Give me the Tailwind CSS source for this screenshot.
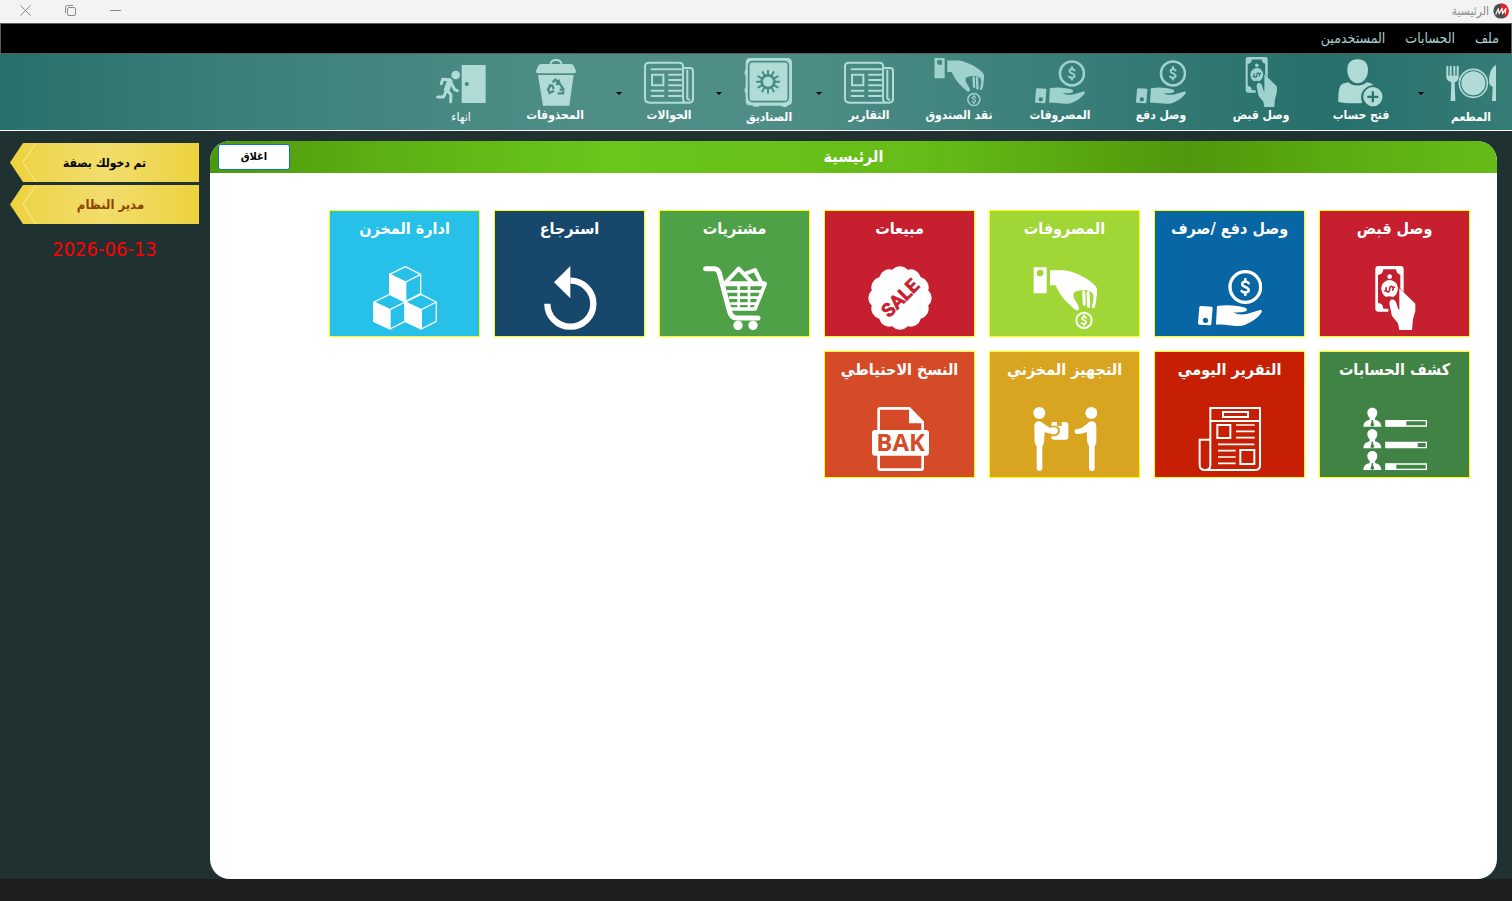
<!DOCTYPE html>
<html lang="ar" dir="rtl">
<head>
    <meta charset="utf-8">
    <title>الرئيسية</title>
    <script src="https://cdn.jsdelivr.net/npm/@tailwindcss/browser@4"></script>
</head>
<body class="min-h-screen flex flex-col bg-[#1f3231] font-['DejaVu_Sans_Condensed','DejaVu_Sans',sans-serif]">

    <!-- shared icons -->
    <svg class="hidden">
        <symbol id="dollar" viewBox="0 0 40 60">
            <path d="M31 18C27 11 10 10 10 21c0 10 21 8 21 19 0 10-18 10-23 3M20 4v9M20 47v9" fill="none" stroke="currentColor" stroke-width="8" stroke-linecap="round"/>
        </symbol>
        <symbol id="receipt" viewBox="0 0 192 192">
            <path fill-rule="evenodd" fill="currentColor" d="M46 0h67q9 0 9 9v70l-10-12V26q-11-1-13-16H61q-1 15-16 17v84q15 1 16 17h15v9H46q-9 0-9-9V9q0-9 9-9z"/>
            <circle cx="80" cy="32" r="7" fill="currentColor"/>
            <path fill="currentColor" d="M55 69a25 25 0 1 1 48 8q-3 11-13 16-14-4-20 0-13-6-15-24z"/>
            <g transform="rotate(68 80 69)" class="text-[var(--hole)]"><use href="#dollar" x="68" y="50" width="24" height="38"/></g>
            <path fill="currentColor" d="M84 101c-6 4-5 12-3 22l6 27 18 22 4 20h38l3-32 7-25v-22L120 77l-11-10v65c-7-4-6-27-17-31-3-1-6-1-8 0z"/>
        </symbol>
        <symbol id="pay" viewBox="0 0 192 192">
            <circle cx="142" cy="63" r="46" fill="none" stroke="currentColor" stroke-width="10"/>
            <use href="#dollar" x="123" y="35" width="38" height="56"/>
            <path fill="currentColor" fill-rule="evenodd" d="M11 120l30 2q3 0 3 4l-4 48q0 4-4 4l-32-2q-4 0-4-4l4-48q0-4 7-4zM22 155a8 8 0 1 0 1 16 8 8 0 0 0-1-16z"/>
            <path fill="currentColor" d="M57 120c35-6 65 0 85 5 6 3 6 9 1 11-11 4-23 4-37 3 12 8 27 7 40 5l40-12c6 0 7 4 4 8-14 20-29 26-48 36-10 5-25 4-37 3-22-2-40-4-48-3-2 0-3-1-3-3z"/>
        </symbol>
        <symbol id="drop-coin" viewBox="0 0 192 192">
            <path fill="currentColor" fill-rule="evenodd" d="M2 4h39v78H2zM21 11a10 10 0 1 0 1 20 10 10 0 0 0-1-20z"/>
            <path fill="currentColor" d="M51 13h42c44 5 91 38 97 51 3 8 2 18 2 26l-10-1c-4-11-14-16-30-16-15 0-31 3-31 13 0 13 13 24 18 41q-3 7-9 6c-25-18-48-42-62-75H51z"/>
            <path d="M152 78l2 37M165 80l2 41M186 80c1 15-1 30-5 42" fill="none" stroke="currentColor" stroke-width="9" stroke-linecap="round"/>
            <circle cx="153" cy="163" r="23" fill="none" stroke="currentColor" stroke-width="6"/>
            <use href="#dollar" x="140" y="145" width="26" height="36"/>
        </symbol>
        <symbol id="news" viewBox="0 0 150 150">
            <path d="M15 17h91q11 0 11 10v98q0 12 11 12H16q-13 0-13-13V28q0-11 12-11zM118 33h20q9 0 9 9v83q0 11-12 12h-10" fill="none" stroke="currentColor" stroke-width="6"/>
            <path d="M130 38v84q0 6 8 6" fill="none" stroke="currentColor" stroke-width="6"/>
            <path d="M24 53h34v32H24z" fill="none" stroke="currentColor" stroke-width="6"/>
            <path d="M23 37h88M75 53h36M75 69h36M75 85h36M23 101h35M75 101h36M23 117h35M75 117h36" stroke="currentColor" stroke-width="6" stroke-linecap="round"/>
        </symbol>
        <symbol id="arrow" viewBox="0 0 6 3"><path d="M0 0h6L3 3z"/></symbol>
    </svg>

    <!-- title bar -->
    <header class="flex h-[23px] items-center justify-between bg-[#f3f3f3] pr-[3px] pb-0.5 pl-5 text-[#8a8a8a]">
        <div class="flex items-center gap-1">
            <svg class="size-4" viewBox="0 0 42 42">
                <circle cx="21" cy="21" r="20" fill="#4b4f54"/>
                <path d="M21 1a20 20 0 0 1 12 36L18 20z" fill="#e3202b"/>
                <path d="M7 30l7-15 2 13 8-14 1 14 9-14-2 14" fill="none" stroke="#fff" stroke-width="3" stroke-linejoin="round"/>
            </svg>
            <h1 class="text-xs">الرئيسية</h1>
        </div>
        <div class="flex items-center gap-[34px]">
            <button aria-label="تصغير"><svg class="size-[11px]" viewBox="0 0 11 11"><path d="M0 5.500h11" stroke="#888"/></svg></button>
            <button aria-label="استعادة"><svg class="size-[11px]" viewBox="0 0 11 11" fill="none" stroke="#888"><rect x="2.500" y="2.500" width="8" height="8" rx="1.500"/><path d="M.5 8V2.500q0-2 2-2H8"/></svg></button>
            <button aria-label="اغلاق"><svg class="size-[11px]" viewBox="0 0 11 11" stroke="#888"><path d="M.5.500l10 10M10.500.500l-10 10"/></svg></button>
        </div>
    </header>

    <!-- menu -->
    <nav class="flex h-[31px] items-center gap-5 border border-[#5c5c5c] bg-black px-3 pb-0.5 text-sm text-[#a9d0d2]">
        <a href="#">ملف</a>
        <a href="#">الحسابات</a>
        <a href="#">المستخدمين</a>
    </nav>

    <!-- toolbar -->
    <div class="flex h-[77px] items-start border-b border-white bg-[linear-gradient(to_right,#27706b,#3c7f79_15%,#4e8e87_38%,#4e8e87_52%,#27706b_88%,#367c77)] pt-[3px] pr-px text-xs leading-4 font-bold text-white [--hole:#2f7771]">
        <button class="flex w-20 flex-col items-center gap-0.5">
            <svg class="size-[50px] text-[#b0dbd7]" viewBox="0 0 150 150">
                <circle cx="82" cy="79" r="42" fill="none" stroke="currentColor" stroke-width="5"/>
                <circle cx="82" cy="79" r="36" fill="currentColor"/>
                <path fill="currentColor" d="M1 28q3-4 6 0v28h4V28q3-4 6 0v28h5V28q3-4 6 0v28h4V28q3-4 6 0v33q0 11-12 15l2 56H14l2-56Q1 71 1 61zM150 24v108h-12l2-42q-11-5-11-17c0-22 7-42 21-49z"/>
            </svg>
            المطعم
        </button>
        <svg class="mt-[35px] h-[3px] w-5"><use href="#arrow"/></svg>
        <button class="flex w-25 flex-col items-center">
            <svg class="size-[50px] text-[#b0dbd7]" viewBox="0 0 150 150">
                <path fill="currentColor" d="M65 7c22 0 31 13 31 32 0 22-14 40-31 40S34 61 34 39C34 20 43 7 65 7zM37 76c14 13 41 13 55 0 12 2 17 4 20 9a36 36 0 0 0-34 50l1 3C50 140 25 139 7 134c0-24 1-44 9-51 4-4 12-5 21-7z"/>
                <path fill="currentColor" fill-rule="evenodd" d="M110 90a29 29 0 1 0 1 58 29 29 0 0 0-1-58zM107 103h7v13h13v7h-13v13h-7v-13H94v-7h13z"/>
            </svg>
            فتح حساب
        </button>
        <button class="flex w-25 flex-col items-center">
            <svg class="size-[50px] text-[#9fd1cd]"><use href="#receipt"/></svg>
            وصل قبض
        </button>
        <button class="flex w-25 flex-col items-center">
            <svg class="size-[50px] text-[#9fd1cd]"><use href="#pay"/></svg>
            وصل دفع
        </button>
        <button class="flex w-[102px] flex-col items-center">
            <svg class="size-[50px] text-[#9fd1cd]"><use href="#pay"/></svg>
            المصروفات
        </button>
        <button class="flex w-25 flex-col items-center">
            <svg class="size-[50px] text-[#9fd1cd]"><use href="#drop-coin"/></svg>
            نقد الصندوق
        </button>
        <button class="flex w-20 flex-col items-center">
            <svg class="size-[50px] text-[#b0dbd7]"><use href="#news"/></svg>
            التقارير
        </button>
        <svg class="mt-[35px] h-[3px] w-5"><use href="#arrow"/></svg>
        <button class="flex w-20 flex-col items-center gap-0.5">
            <svg class="size-[50px] text-[#b0dbd7]" viewBox="0 0 150 150">
                <path fill="currentColor" d="M18 3h112q14 0 14 14v114q0 13-13 14v2q-9 7-20-1H48q-12 7-22 0v-1H18q-13 0-13-13v-22q-7-10 0-21V58q-7-10 0-21V17Q5 3 18 3z"/>
                <rect x="14" y="14" width="119" height="120" rx="12" fill="none" stroke="#4a8b85" stroke-width="5"/>
                <g fill="none" stroke="#4a8b85" stroke-width="6" stroke-linecap="round">
                    <circle cx="72" cy="74" r="19" stroke-width="8"/>
                    <path d="M72 41v66M39 74h66M56 45l33 58M43 58l58 33M89 45l-34 58M101 58l-58 33"/>
                </g>
                <circle cx="72" cy="74" r="15" fill="currentColor"/>
            </svg>
            الصناديق
        </button>
        <svg class="mt-[35px] h-[3px] w-5"><use href="#arrow"/></svg>
        <button class="flex w-20 flex-col items-center">
            <svg class="size-[50px] text-[#b0dbd7]"><use href="#news"/></svg>
            الحوالات
        </button>
        <svg class="mt-[35px] h-[3px] w-5"><use href="#arrow"/></svg>
        <button class="flex w-[108px] flex-col items-center">
            <svg class="size-[50px] text-[#b0dbd7]" viewBox="0 0 150 150">
                <path d="M61 21q4-13 17-12 13-1 17 12" fill="none" stroke="currentColor" stroke-width="6"/>
                <path fill="currentColor" d="M34 21h88q8 0 11 9l5 13q1 5-5 6H23q-6-1-5-6l5-13q3-9 11-9zM24 54h107l-13 92H39z"/>
                <path d="M68 76l8-8 9 9M91 83l9 13-11 3M83 109h16l1-8M72 101l-13 7-5-11 6-10M56 85l11 1 4 10M85 68l4 12-11 1" fill="none" stroke="#4a8b85" stroke-width="7"/>
            </svg>
            المحذوفات
        </button>
        <button class="flex w-20 flex-col items-center gap-0.5 font-normal">
            <svg class="size-[50px] text-[#b0dbd7]" viewBox="0 0 150 150">
                <path fill="currentColor" fill-rule="evenodd" d="M77 24h72v114H77zM92 75a6 6 0 1 0 1 12 6 6 0 0 0-1-12z"/>
                <circle cx="59" cy="54" r="13" fill="currentColor"/>
                <g fill="none" stroke="currentColor" stroke-width="9" stroke-linecap="round" stroke-linejoin="round">
                    <path d="M16 80l4-13 22 1M47 81l9 17 8 3M35 101l10 13-1 20M30 105l-8 15H5"/>
                    <path d="M41 74l-9 24" stroke-width="17"/>
                </g>
            </svg>
            انهاء
        </button>
    </div>

    <main class="flex grow pr-[15px]">
        <section class="mt-[10px] flex grow flex-col overflow-hidden rounded-[20px] bg-white">
            <div class="flex h-8 items-center bg-[linear-gradient(to_right,#4e990b,#5db014_14%,#64bb17_22%,#6bc51b_31%,#66bc18_55%,#4f980b_76%,#5bac12_88%,#66bb18)] pl-2">
                <h2 class="grow pr-20 text-center text-base font-bold text-white">الرئيسية</h2>
                <button class="h-[26px] w-[72px] rounded-[3px] border border-[#0a74c4] bg-white text-[11px] font-bold text-black">اغلاق</button>
            </div>

            <div class="flex flex-wrap gap-[14px] pt-[37px] pr-[27px] text-base font-bold text-white">
                <button class="flex h-[127px] w-[151px] flex-col items-center justify-between border border-[#ff0] bg-[#c61f30] pt-1.5 pb-1.5 [--hole:#c61f30]">
                    وصل قبض
                    <svg class="size-16"><use href="#receipt"/></svg>
                </button>
                <button class="flex h-[127px] w-[151px] flex-col items-center justify-between border border-[#ff0] bg-[#0966a4] pt-1.5 pb-1.5">
                    وصل دفع /صرف
                    <svg class="size-16"><use href="#pay"/></svg>
                </button>
                <button class="flex h-[127px] w-[151px] flex-col items-center justify-between border border-[#ff0] bg-[#a0d636] pt-1.5 pb-1.5">
                    المصروفات
                    <svg class="size-16"><use href="#drop-coin"/></svg>
                </button>
                <button class="flex h-[127px] w-[151px] flex-col items-center justify-between border border-[#ff0] bg-[#c61f30] pt-1.5 pb-1.5">
                    مبيعات
                    <svg class="size-16" viewBox="0 0 192 192">
                        <path d="M96 32v128M32 96h128M128 41l-64 110M151 64L41 128M64 41l64 110M41 64l110 64" stroke="#fff" stroke-width="62" stroke-linecap="round"/>
                        <text x="96" y="116" text-anchor="middle" transform="rotate(-45 96 96)" direction="ltr" fill="#c61f30" stroke="#c61f30" stroke-width="2" class="font-[Roboto,sans-serif] text-[56px] font-bold">SALE</text>
                    </svg>
                </button>
                <button class="flex h-[127px] w-[151px] flex-col items-center justify-between border border-[#ff0] bg-[#4ea146] pt-1.5 pb-1.5">
                    مشتريات
                    <svg class="size-16" viewBox="0 0 192 192" fill="none" stroke="#fff">
                        <path d="M8 8h27q10 0 14 13l30 113q5 22 22 22h64" stroke-width="15" stroke-linecap="round"/>
                        <path d="M68 50l39-42 40 42M127 23l29-11 20 40" stroke-width="12" stroke-linejoin="round"/>
                        <path d="M64 53h120" stroke-width="15" stroke-linecap="round"/>
                        <path d="M107 58v70M138 58v70M72 76h102M78 95h90M82 113h80" stroke-width="8"/>
                        <path d="M186 55l-30 74H84" stroke-width="11" stroke-linejoin="round"/>
                        <circle cx="105" cy="178" r="14" fill="#fff" stroke="none"/>
                        <circle cx="150" cy="178" r="14" fill="#fff" stroke="none"/>
                    </svg>
                </button>
                <button class="flex h-[127px] w-[151px] flex-col items-center justify-between border border-[#ff0] bg-[#17486b] pt-1.5 pb-1.5">
                    استرجاع
                    <svg class="size-16" viewBox="0 0 192 192">
                        <path d="M97 44a69 69 0 1 1-69 69" fill="none" stroke="#fff" stroke-width="19"/>
                        <path d="M97 0v97L48 49z" fill="#fff"/>
                    </svg>
                </button>
                <button class="flex h-[127px] w-[151px] flex-col items-center justify-between border border-[#ff0] bg-[#27c0e8] pt-1.5 pb-1.5">
                    ادارة المخزن
                    <svg class="size-16" viewBox="0 0 192 192">
                        <defs>
                            <g id="cube" stroke="#fff" stroke-width="4" stroke-linejoin="round">
                                <path d="M97 2l46 23v58l-45 23-48-23V25zM143 25L98 48" fill="none"/>
                                <path d="M50 25l48 23v58L50 83z" fill="#fff"/>
                            </g>
                        </defs>
                        <use href="#cube"/>
                        <use href="#cube" x="-47" y="83"/>
                        <use href="#cube" x="47" y="83"/>
                    </svg>
                </button>
                <button class="flex h-[127px] w-[151px] flex-col items-center justify-between border border-[#ff0] bg-[#418345] pt-1.5 pb-1.5">
                    كشف الحسابات
                    <svg class="size-16" viewBox="0 0 192 192">
                        <defs>
                            <g id="person">
                                <path fill="#fff" d="M28 2c10 0 15 7 15 15 0 7-4 12-7 16v5c11 3 18 7 19 21H1c1-14 8-18 19-21v-5c-3-4-7-9-7-16C13 9 18 2 28 2z"/>
                                <path fill="#418345" d="M25 39h6l-1 4 4 12-6 4-6-4 4-12z"/>
                                <path d="M69 41h121v16H69z" fill="none" stroke="#fff" stroke-width="4"/>
                            </g>
                        </defs>
                        <use href="#person"/>
                        <use href="#person" y="65"/>
                        <use href="#person" y="130"/>
                        <path fill="#fff" d="M68 40h62v18H68zM68 105h96v18H68zM68 170h32v18H68z"/>
                    </svg>
                </button>
                <button class="flex h-[127px] w-[151px] flex-col items-center justify-between border border-[#ff0] bg-[#c61f03] pt-1.5 pb-1.5">
                    التقرير اليومي
                    <svg class="size-16" viewBox="0 0 192 192" fill="none" stroke="#fff" stroke-width="6">
                        <path d="M37 174V3h149v172q0 14-14 14H22q-17 0-17-15V98h32M37 174q0 15-15 15M37 42h149M75 15h75v15H75zM58 54h39v39H58zM127 129h42v42h-42z"/>
                        <path d="M114 54h56M114 73h56M114 92h56M60 112h109M60 131h53M60 150h53M60 169h53" stroke-width="5"/>
                    </svg>
                </button>
                <button class="flex h-[127px] w-[151px] flex-col items-center justify-between border border-[#ff0] bg-[#d9a520] pt-1.5 pb-1.5">
                    التجهيز المخزني
                    <svg class="size-16" viewBox="0 0 192 192">
                        <path fill="#fff" d="M62 45h10v12h14V45h12q8 0 8 8v38q0 7-8 7H62q-7 0-7-7V52q0-7 7-7z"/>
                        <path d="M54 59h12c15 2 17 20 0 26H52" fill="none" stroke="#d9a520" stroke-width="6"/>
                        <g fill="#fff">
                            <circle cx="19" cy="18" r="18"/>
                            <path d="M4 57q1-14 14-14 7 0 12 6l20 13 15-1q10 2 8 10-3 8-16 9-12 0-22-5l-2 32-5 11v66q-1 8-9 8-8 0-8-8v-66l-6-10z"/>
                            <circle cx="175" cy="18" r="18"/>
                            <path d="M190 57q-1-14-14-14-7 0-12 6l-19 15-13 2q-8 1-7 8 1 7 10 7 13 0 26-7l2 33 5 11v66q1 8 9 8 8 0 8-8v-66l5-10z"/>
                        </g>
                    </svg>
                </button>
                <button class="flex h-[127px] w-[151px] flex-col items-center justify-between border border-[#ff0] bg-[#d54b28] pt-1.5 pb-1.5">
                    النسخ الاحتياطي
                    <svg class="size-16" viewBox="0 0 192 192">
                        <path d="M36 4h88l40 41v137q0 6-6 6H38q-6 0-6-6V8q0-4 4-4z" fill="none" stroke="#fff" stroke-width="8"/>
                        <path d="M123 3l45 46h-45z" fill="#fff"/>
                        <rect x="12" y="69" width="171" height="77" rx="9" fill="#fff"/>
                        <text x="98" y="132" text-anchor="middle" direction="ltr" fill="#d54b28" class="font-['Open_Sans',sans-serif] text-[72px] font-bold">BAK</text>
                    </svg>
                </button>
            </div>
        </section>

        <aside class="flex w-[210px] shrink-0 flex-col gap-[3px] pt-3 pr-[11px] pl-[10px] text-center">
            <div class="flex h-[39px] items-center bg-linear-to-r from-[#edd23c] via-[#f2dd6c] to-[#edd23c] [clip-path:polygon(13px_0,100%_0,100%_100%,13px_100%,0_50%)]">
                <p class="grow pr-7 text-xs font-bold text-black">تم دخولك بصفة</p>
                <svg class="h-[39px] w-7" viewBox="0 0 28 39"><path d="M26 0L13 19.500 26 39" fill="none" stroke="#f8eba0"/></svg>
            </div>
            <div class="flex h-[39px] items-center bg-linear-to-r from-[#edd23c] via-[#f2dd6c] to-[#edd23c] [clip-path:polygon(13px_0,100%_0,100%_100%,13px_100%,0_50%)]">
                <p class="grow pr-4 text-[13px] font-bold text-[#8b4500]">مدير النظام</p>
                <svg class="h-[39px] w-7" viewBox="0 0 28 39"><path d="M26 0L13 19.500 26 39" fill="none" stroke="#f8eba0"/></svg>
            </div>
            <time class="mt-2 text-xl text-[#f00]" dir="ltr">2026-06-13</time>
        </aside>
    </main>

    <footer class="h-[22px] bg-[#1e1e1e]"></footer>
</body>
</html>
